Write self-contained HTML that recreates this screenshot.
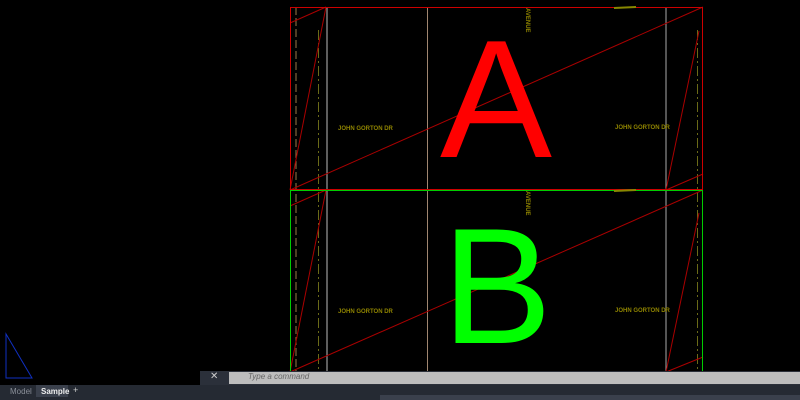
<!DOCTYPE html>
<html><head><style>
html,body{margin:0;padding:0;background:#000;width:800px;height:400px;overflow:hidden;font-family:"Liberation Sans",sans-serif}
svg{position:absolute;left:0;top:0}
.cmd{position:absolute;left:200px;top:371px;width:600px;height:14px;background:#2b303a}
.tabs{position:absolute;left:0;top:385px;width:800px;height:15px;background:#252a33}
</style></head><body>
<svg width="800" height="400" viewBox="0 0 800 400">
<g fill="none" stroke-width="1">
<line x1="327" y1="7" x2="327" y2="372" stroke="#bbb"/>
<line x1="666" y1="7" x2="666" y2="372" stroke="#aaa"/>
<line x1="427.5" y1="7" x2="427.5" y2="372" stroke="#a08670"/>
<line x1="296" y1="7" x2="296" y2="372" stroke="#9a7a48" stroke-dasharray="8,3"/>
<line x1="318.5" y1="30" x2="318.5" y2="372" stroke="#6a6a18" stroke-dasharray="10,3,2,3"/>
<line x1="697.5" y1="30" x2="697.5" y2="372" stroke="#6a6a18" stroke-dasharray="10,3,2,3"/>
<line x1="290" y1="190" x2="703" y2="7" stroke="#a00"/>
<line x1="290" y1="23" x2="326" y2="7" stroke="#a00"/>
<line x1="290" y1="190" x2="326" y2="7" stroke="#a00"/>
<line x1="666" y1="190" x2="699" y2="31" stroke="#a00"/>
<line x1="666" y1="190" x2="703" y2="174" stroke="#a00"/>
<line x1="290" y1="372" x2="703" y2="190" stroke="#a00"/>
<line x1="290" y1="206" x2="326" y2="190" stroke="#a00"/>
<line x1="290" y1="372" x2="326" y2="190" stroke="#a00"/>
<line x1="666" y1="372" x2="699" y2="213" stroke="#a00"/>
<line x1="666" y1="372" x2="703" y2="357" stroke="#a00"/>
<rect x="290.5" y="7.5" width="412" height="182" stroke="#c00"/>
<rect x="290.5" y="190.5" width="412" height="181" stroke="#0c0"/>
<line x1="614" y1="8" x2="636" y2="7" stroke="#880" stroke-width="2"/>
<line x1="614" y1="191" x2="636" y2="190" stroke="#880" stroke-width="2"/>
<path d="M6 334 L6 378 L32 378 Z" stroke="#1030c0"/>
</g>
<g fill="#8f8400" font-size="6" font-weight="bold">
<text x="338" y="130">JOHN GORTON DR</text>
<text x="615" y="129">JOHN GORTON DR</text>
<text x="338" y="313">JOHN GORTON DR</text>
<text x="615" y="312">JOHN GORTON DR</text>
<text transform="translate(526,8) rotate(90)">AVENUE</text>
<text transform="translate(526,191) rotate(90)">AVENUE</text>
</g>
<text x="496" y="157" fill="#f00" font-size="168" text-anchor="middle">A</text>
<text x="497" y="343" fill="#0f0" font-size="165" text-anchor="middle">B</text>
</svg>
<div class="cmd">
<div style="position:absolute;left:29px;top:1px;width:571px;height:12px;background:#bdbdbd"></div>
<span style="position:absolute;left:10px;top:0;color:#ccc;font-size:10px">✕</span>
<span style="position:absolute;left:48px;top:1px;color:#666;font-size:8px;font-style:italic">Type a command</span>
</div>
<div class="tabs">
<span style="position:absolute;left:10px;top:2px;color:#8a8f98;font-size:8px">Model</span>
<div style="position:absolute;left:36px;top:0;width:32px;height:12px;background:#3a404c"></div>
<span style="position:absolute;left:41px;top:2px;color:#eee;font-size:8px;font-weight:bold">Sample</span>
<span style="position:absolute;left:73px;top:0px;color:#ccc;font-size:9px">+</span>
<div style="position:absolute;left:380px;top:10px;width:420px;height:5px;background:#3a404c"></div>
</div>
</body></html>
